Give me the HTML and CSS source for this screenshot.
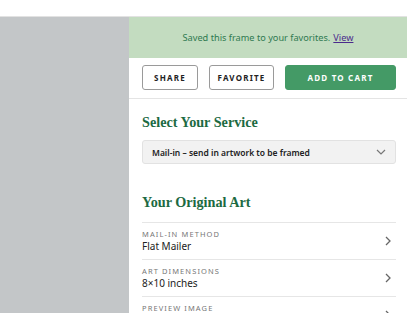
FILE: index.html
```html
<!DOCTYPE html>
<html>
<head>
<meta charset="utf-8">
<link rel="stylesheet" href="styles.css">
</head>
<body>
<div class="topbar"></div>
<div class="main">
  <div class="preview"></div>
  <div class="panel">
    <div class="banner">Saved this frame to your favorites. <a href="#" class="banner-link">View</a></div>
    <div class="actions">
      <button class="btn btn-outline">SHARE</button>
      <button class="btn btn-outline">FAVORITE</button>
      <button class="btn btn-primary">ADD TO CART</button>
    </div>
    <div class="content">
      <h2 class="heading">Select Your Service</h2>
      <div class="select">
        <span class="select-text">Mail-in – send in artwork to be framed</span>
        <svg class="select-chevron" width="10" height="6" viewBox="0 0 10 6"><path d="M1 1l4 4 4-4" fill="none" stroke="#777" stroke-width="1.2"/></svg>
      </div>
      <h2 class="heading heading-art">Your Original Art</h2>
      <div class="rows">
        <div class="row">
          <div class="row-text">
            <div class="row-label">MAIL-IN METHOD</div>
            <div class="row-value">Flat Mailer</div>
          </div>
          <svg class="row-chevron" width="6" height="10" viewBox="0 0 6 10"><path d="M1 1l4 4-4 4" fill="none" stroke="#666" stroke-width="1.3"/></svg>
        </div>
        <div class="row">
          <div class="row-text">
            <div class="row-label">ART DIMENSIONS</div>
            <div class="row-value">8×10 inches</div>
          </div>
          <svg class="row-chevron" width="6" height="10" viewBox="0 0 6 10"><path d="M1 1l4 4-4 4" fill="none" stroke="#666" stroke-width="1.3"/></svg>
        </div>
        <div class="row">
          <div class="row-text">
            <div class="row-label">PREVIEW IMAGE</div>
            <div class="row-value">&nbsp;</div>
          </div>
          <svg class="row-chevron" width="6" height="10" viewBox="0 0 6 10"><path d="M1 1l4 4-4 4" fill="none" stroke="#666" stroke-width="1.3"/></svg>
        </div>
      </div>
    </div>
  </div>
</div>
</body>
</html>
```
FILE: styles.css
```css
html, body {
  margin: 0;
  padding: 0;
  background: #fff;
  font-family: "Noto Sans", "Liberation Sans", sans-serif;
  overflow: hidden;
}
.topbar {
  height: 16px;
  border-bottom: 1px solid #e2e2e2;
  background: #fff;
}
.main {
  display: flex;
  height: 296px;
}
.preview {
  width: 129px;
  flex: none;
  background: #c3c6c8;
}
.panel {
  flex: 1;
  background: #fff;
  overflow: hidden;
}
.banner {
  height: 41px;
  background: #c3dcc0;
  color: #2f7a50;
  font-size: 9.2px;
  display: flex;
  align-items: center;
  justify-content: center;
  gap: 3px;
}
.banner-link {
  color: #4b2a8c;
  text-decoration: underline;
}
.actions {
  display: flex;
  gap: 11px;
  padding: 7px 11px 8px 13px;
  border-bottom: 1px solid #e4e4e4;
}
.btn {
  height: 25px;
  font-family: "Noto Sans", "Liberation Sans", sans-serif;
  font-size: 8px;
  font-weight: 700;
  letter-spacing: 1.2px;
  border-radius: 3px;
  padding: 0;
  cursor: pointer;
}
.btn-outline {
  background: #fff;
  border: 1px solid #9a9a9a;
  color: #222;
}
.btn-outline:nth-child(1) { width: 56px; }
.btn-outline:nth-child(2) { width: 65px; }
.btn-primary {
  flex: 1;
  background: #449a66;
  border: 1px solid #449a66;
  color: #fff;
}
.content {
  padding: 0 11px 0 13px;
}
.heading {
  margin: 0;
  font-family: "Liberation Serif", "DejaVu Serif", serif;
  font-weight: 700;
  font-size: 14.2px;
  line-height: 20px;
  color: #1c6a42;
  padding-top: 13px;
}
.select {
  margin-top: 8px;
  height: 22px;
  border: 1px solid #e2e2e2;
  border-radius: 3px;
  background: #f2f2f2;
  display: flex;
  align-items: center;
  justify-content: space-between;
  padding: 0 9px 0 9px;
}
.select-text {
  font-size: 8.5px;
  font-weight: 600;
  color: #222;
}
.heading-art {
  padding-top: 28px;
}
.rows {
  margin-top: 10px;
}
.row {
  height: 36px;
  border-top: 1px solid #e6e6e6;
  display: flex;
  align-items: center;
  justify-content: space-between;
  padding-right: 5px;
}
.row-label {
  font-size: 7.5px;
  letter-spacing: 1.1px;
  color: #777;
  line-height: 11px;
}
.row-value {
  font-size: 10px;
  color: #222;
  line-height: 13px;
}
.row-chevron {
  flex: none;
}
```
